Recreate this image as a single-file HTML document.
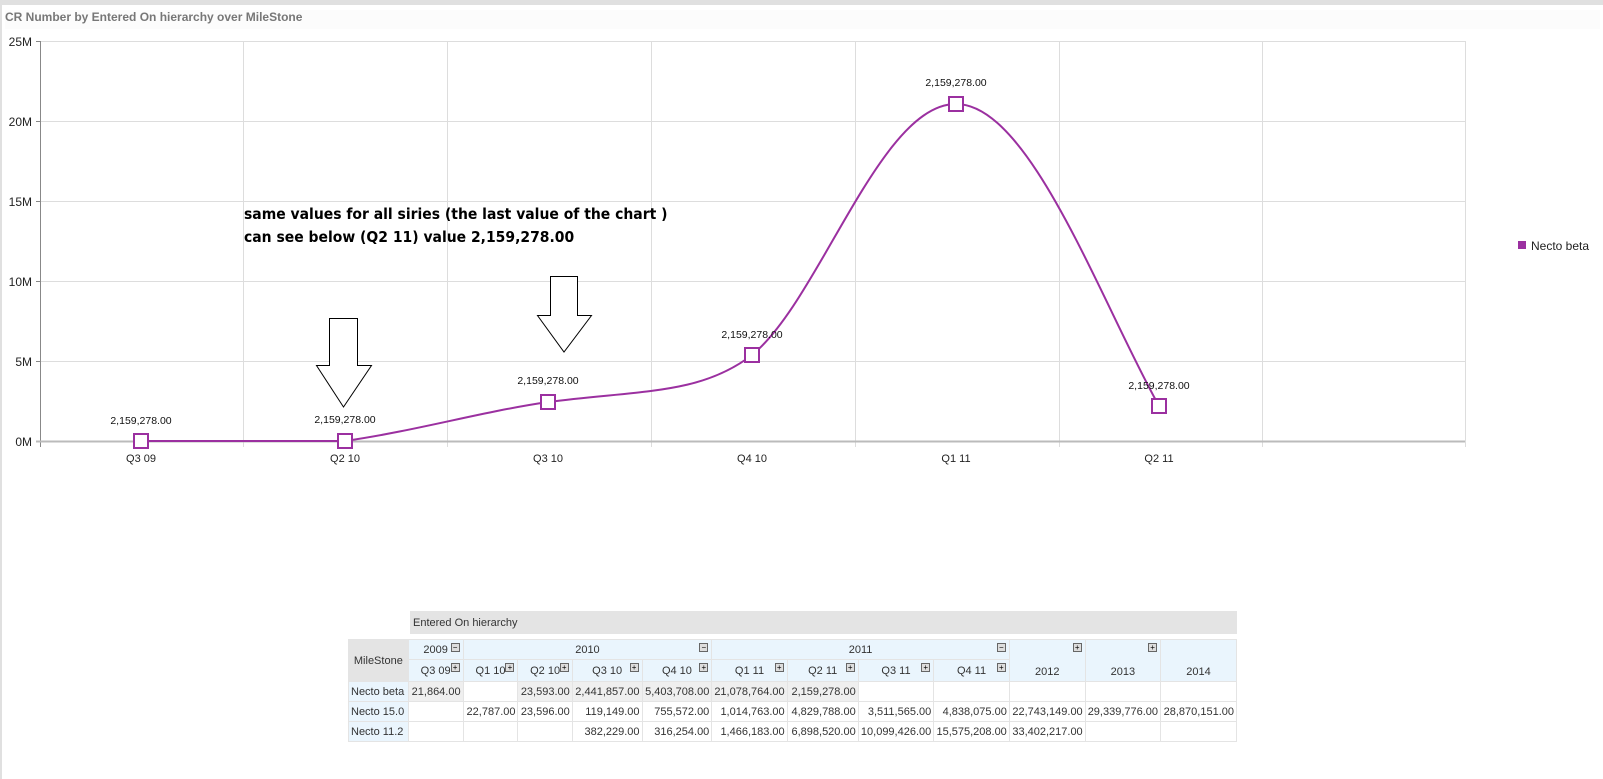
<!DOCTYPE html>
<html><head><meta charset="utf-8"><style>
body{margin:0;width:1603px;height:779px;background:#fff;position:relative;overflow:hidden;font-family:"Liberation Sans",Arial,sans-serif}
.t{position:absolute;left:0;top:0;width:1603px;height:5px;background:#e0e0e0}
.l{position:absolute;left:0;top:0;width:2px;height:779px;background:#e0e0e0}
.title{position:absolute;left:5px;top:10px;font-size:12px;font-weight:bold;color:#777;background:#fcfcfc;width:1595px;height:19px}
table{position:absolute;left:348px;top:639px;width:889px;border-collapse:collapse;font-size:11px;color:#333;border:1px solid #8ad}
td{border:1px solid #e4e4e4;padding:0 2px;height:19px;text-align:right;white-space:nowrap}
.h{background:#eaf5fd;text-align:center;position:relative}
.g{background:#efefef}
.ms{background:#e4e4e4;text-align:center}
.rh{background:#eaf5fd;text-align:left}
.b{position:absolute;top:3px;right:3px;width:7px;height:7px;border:1px solid #666;background:#ddd;font-size:8px;line-height:7px;text-align:center;color:#000}
</style></head><body>
<div class="t"></div><div class="l"></div>
<div class="title">CR Number by Entered On hierarchy over MileStone</div>
<svg width="1603" height="779" style="position:absolute;left:0;top:0" font-family="Liberation Sans,Arial,sans-serif">
<g stroke="#ddd" stroke-width="1">
<line x1="40" y1="41.5" x2="1465" y2="41.5"/><line x1="40" y1="121.5" x2="1465" y2="121.5"/><line x1="40" y1="201.5" x2="1465" y2="201.5"/><line x1="40" y1="281.5" x2="1465" y2="281.5"/><line x1="40" y1="361.5" x2="1465" y2="361.5"/>
<line x1="243.5" y1="41" x2="243.5" y2="447"/><line x1="447.5" y1="41" x2="447.5" y2="447"/><line x1="651.5" y1="41" x2="651.5" y2="447"/><line x1="855.5" y1="41" x2="855.5" y2="447"/><line x1="1059.5" y1="41" x2="1059.5" y2="447"/><line x1="1262.5" y1="41" x2="1262.5" y2="447"/><line x1="1465.5" y1="41" x2="1465.5" y2="447"/>
</g>
<line x1="40.5" y1="41" x2="40.5" y2="447" stroke="#888"/>
<line x1="36" y1="441.5" x2="1465" y2="441.5" stroke="#bbb" stroke-width="2"/>
<g stroke="#888"><line x1="36" y1="41.5" x2="40" y2="41.5"/><line x1="36" y1="121.5" x2="40" y2="121.5"/><line x1="36" y1="201.5" x2="40" y2="201.5"/><line x1="36" y1="281.5" x2="40" y2="281.5"/><line x1="36" y1="361.5" x2="40" y2="361.5"/></g>
<g font-size="12" fill="#222" text-anchor="end"><text x="32" y="46">25M</text><text x="32" y="126">20M</text><text x="32" y="206">15M</text><text x="32" y="286">10M</text><text x="32" y="366">5M</text><text x="32" y="446">0M</text></g>
<g font-size="11" fill="#222" text-anchor="middle"><text x="141" y="462">Q3 09</text><text x="345" y="462">Q2 10</text><text x="548" y="462">Q3 10</text><text x="752" y="462">Q4 10</text><text x="956" y="462">Q1 11</text><text x="1159" y="462">Q2 11</text></g>
<path d="M141,441 L345,441 C420,430 480,412 548,402 C640,390 700,395 752,355 C820,300 880,104 956,104 C1030,104 1100,300 1159,406" fill="none" stroke="#9b30a0" stroke-width="2"/>
<g fill="#fff" stroke="#9b30a0" stroke-width="2"><rect x="134" y="434" width="14" height="14"/><rect x="338" y="434" width="14" height="14"/><rect x="541" y="395" width="14" height="14"/><rect x="745" y="348" width="14" height="14"/><rect x="949" y="97" width="14" height="14"/><rect x="1152" y="399" width="14" height="14"/></g>
<g font-size="10.5" fill="#111" text-anchor="middle"><text x="141" y="424">2,159,278.00</text><text x="345" y="423">2,159,278.00</text><text x="548" y="384">2,159,278.00</text><text x="752" y="338">2,159,278.00</text><text x="956" y="86">2,159,278.00</text><text x="1159" y="389">2,159,278.00</text></g>
<g fill="#fff" stroke="#000" stroke-width="1"><path d="M329.5,318.5 H357.5 V365.5 H371.5 L343.5,407 L316.5,365.5 H329.5 Z"/><path d="M550.5,276.5 H577.5 V315.5 H591.5 L564,352 L537.5,315.5 H550.5 Z"/></g>
<g font-size="15.5" font-weight="bold" fill="#000" font-family="DejaVu Sans Condensed,Liberation Sans,sans-serif"><text x="244" y="219">same values for all siries (the last value of the chart )</text><text x="244" y="242">can see below (Q2 11) value 2,159,278.00</text></g>
<rect x="1518" y="241" width="8" height="8" fill="#9b30a0"/>
<text x="1531" y="250" font-size="12" fill="#222">Necto beta</text>
</svg>
<div style="position:absolute;left:410px;top:611px;width:827px;height:23px;background:#e4e4e4;font-size:11px;color:#333;line-height:24px;text-indent:3px">Entered On hierarchy</div>
<table>
<tr><td class="ms" rowspan="2" style="width:58px">MileStone</td><td class="h" style="width:52px">2009<span class="b">−</span></td><td class="h" colspan="4">2010<span class="b">−</span></td><td class="h" colspan="4">2011<span class="b">−</span></td><td class="h" rowspan="2" style="width:72px;vertical-align:bottom;padding-bottom:3px">2012<span class="b">+</span></td><td class="h" rowspan="2" style="width:70px;vertical-align:bottom;padding-bottom:3px">2013<span class="b">+</span></td><td class="h" rowspan="2" style="width:72px;vertical-align:bottom;padding-bottom:3px">2014</td></tr>
<tr><td class="h" style="height:21px">Q3 09<span class="b">+</span></td><td class="h" style="width:52px">Q1 10<span class="b">+</span></td><td class="h" style="width:50px">Q2 10<span class="b">+</span></td><td class="h" style="width:66px">Q3 10<span class="b">+</span></td><td class="h" style="width:66px">Q4 10<span class="b">+</span></td><td class="h" style="width:66px">Q1 11<span class="b">+</span></td><td class="h" style="width:70px">Q2 11<span class="b">+</span></td><td class="h" style="width:71px">Q3 11<span class="b">+</span></td><td class="h" style="width:71px">Q4 11<span class="b">+</span></td></tr>
<tr><td class="rh">Necto beta</td><td class="g">21,864.00</td><td></td><td class="g">23,593.00</td><td class="g">2,441,857.00</td><td class="g">5,403,708.00</td><td class="g">21,078,764.00</td><td class="g">2,159,278.00</td><td></td><td></td><td></td><td></td><td></td></tr>
<tr><td class="rh">Necto 15.0</td><td></td><td>22,787.00</td><td>23,596.00</td><td>119,149.00</td><td>755,572.00</td><td>1,014,763.00</td><td>4,829,788.00</td><td>3,511,565.00</td><td>4,838,075.00</td><td>22,743,149.00</td><td>29,339,776.00</td><td>28,870,151.00</td></tr>
<tr><td class="rh">Necto 11.2</td><td></td><td></td><td></td><td>382,229.00</td><td>316,254.00</td><td>1,466,183.00</td><td>6,898,520.00</td><td>10,099,426.00</td><td>15,575,208.00</td><td>33,402,217.00</td><td></td><td></td></tr>
</table>
</body></html>
